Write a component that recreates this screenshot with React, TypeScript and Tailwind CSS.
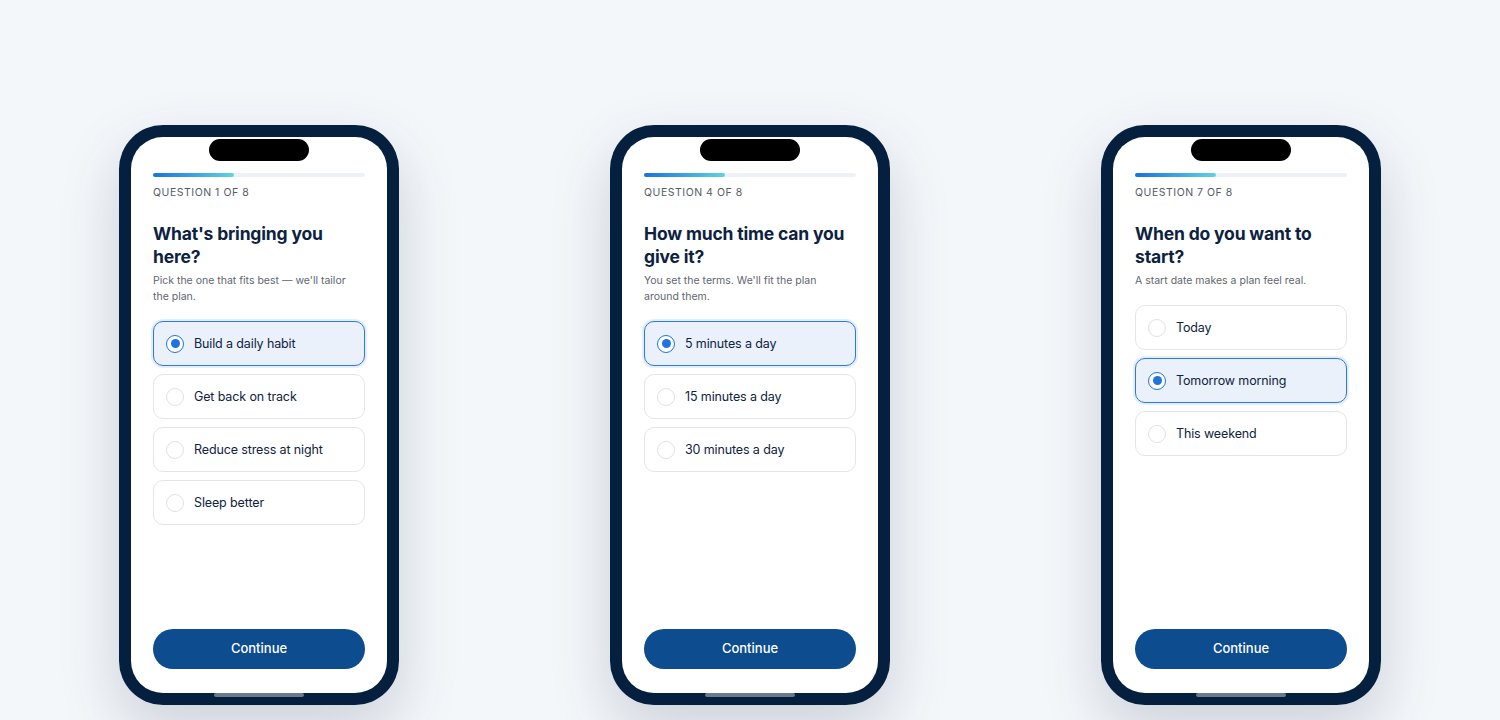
import React from "react";

type Q = {
  n: number;
  title: string;
  sub: string;
  options: string[];
  selected: number;
};

const qs: Q[] = [
  {
    n: 1,
    title: "What's bringing you here?",
    sub: "Pick the one that fits best — we'll tailor the plan.",
    options: ["Build a daily habit", "Get back on track", "Reduce stress at night", "Sleep better"],
    selected: 0,
  },
  {
    n: 4,
    title: "How much time can you give it?",
    sub: "You set the terms. We'll fit the plan around them.",
    options: ["5 minutes a day", "15 minutes a day", "30 minutes a day"],
    selected: 0,
  },
  {
    n: 7,
    title: "When do you want to start?",
    sub: "A start date makes a plan feel real.",
    options: ["Today", "Tomorrow morning", "This weekend"],
    selected: 1,
  },
];

function Option({ label, selected }: { label: string; selected: boolean }) {
  return (
    <div
      className={
        selected
          ? "flex h-[45px] items-center gap-[10px] rounded-[10px] border border-[#2a7ae2] bg-[#eaf1fb] px-[12px] shadow-[0_0_0_2px_rgba(42,122,226,0.12)]"
          : "flex h-[45px] items-center gap-[10px] rounded-[10px] border border-[#e3e5e8] bg-white px-[12px]"
      }
    >
      {selected ? (
        <span className="flex h-[18px] w-[18px] items-center justify-center rounded-full border-[1.5px] border-[#1f74e0] bg-white">
          <span className="h-[9px] w-[9px] rounded-full bg-[#1f74e0]" />
        </span>
      ) : (
        <span className="h-[18px] w-[18px] rounded-full border-[1.5px] border-[#dfe2e6] bg-white" />
      )}
      <span className="pt-[1px] text-[12.5px] leading-none tracking-[-0.01em] text-[#0f2341]">{label}</span>
    </div>
  );
}

function Phone({ q }: { q: Q }) {
  return (
    <div className="relative h-[580px] w-[280px] rounded-[44px] bg-[#04203e] p-[12px] shadow-[0_24px_60px_rgba(20,40,70,0.18)]">
      <div className="relative flex h-full flex-col rounded-[32px] bg-white px-[22px] pb-[24px] pt-[36px]">
        <div className="absolute left-1/2 top-[2px] h-[22px] w-[100px] -translate-x-1/2 rounded-full bg-black" />
        <div className="h-[4px] w-full rounded-full bg-[#eef2f6]">
          <div className="h-full w-[81px] rounded-full bg-gradient-to-r from-[#1b72dc] to-[#62d2df]" />
        </div>
        <div className="mt-[9px] text-[10.5px] leading-[14px] tracking-[0.05em] text-[#555c66]">
          QUESTION {q.n} OF 8
        </div>
        <h2 className="mt-[22px] text-[17.5px] font-bold leading-[23px] tracking-[-0.01em] text-[#0c2240]">
          {q.title}
        </h2>
        <p className="mt-[5px] max-w-[202px] text-[10.5px] leading-[16px] text-[#5f6670]">{q.sub}</p>
        <div className="mt-[16px] flex flex-col gap-[8px]">
          {q.options.map((o, i) => (
            <Option key={o} label={o} selected={i === q.selected} />
          ))}
        </div>
        <div className="flex-1" />
        <button className="h-[40px] w-full rounded-full bg-[#0c4c8f] text-[13px] font-medium text-white">
          Continue
        </button>
      </div>
      <div className="absolute bottom-[8px] left-1/2 h-[4px] w-[90px] -translate-x-1/2 rounded-full bg-[#6b7a8d]" />
    </div>
  );
}

export default function App() {
  return (
    <div
      className="flex h-[720px] w-full justify-center gap-[211px] overflow-hidden bg-[#f4f7fa] pt-[125px]"
      style={{ fontFamily: "Inter, 'Noto Sans', sans-serif" }}
    >
      {qs.map((q) => (
        <Phone key={q.n} q={q} />
      ))}
    </div>
  );
}
